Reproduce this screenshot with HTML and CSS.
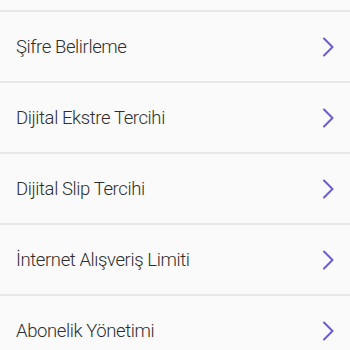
FILE: index.html
```html
<!DOCTYPE html>
<html lang="tr">
<head>
<meta charset="utf-8">
<link rel="stylesheet" href="styles.css">
</head>
<body>
<div class="top"></div>
<ul class="menu">
  <li class="row"><span class="label">Şifre Belirleme</span><svg class="chev" viewBox="0 0 12 20"><path d="M2 1.5 L10.5 10 L2 18.5"/></svg></li>
  <li class="row"><span class="label">Dijital Ekstre Tercihi</span><svg class="chev" viewBox="0 0 12 20"><path d="M2 1.5 L10.5 10 L2 18.5"/></svg></li>
  <li class="row"><span class="label">Dijital Slip Tercihi</span><svg class="chev" viewBox="0 0 12 20"><path d="M2 1.5 L10.5 10 L2 18.5"/></svg></li>
  <li class="row"><span class="label">İnternet Alışveriş Limiti</span><svg class="chev" viewBox="0 0 12 20"><path d="M2 1.5 L10.5 10 L2 18.5"/></svg></li>
  <li class="row"><span class="label">Abonelik Yönetimi</span><svg class="chev" viewBox="0 0 12 20"><path d="M2 1.5 L10.5 10 L2 18.5"/></svg></li>
</ul>
</body>
</html>
```
FILE: styles.css
```css
html, body {
  margin: 0;
  padding: 0;
  background: #fafafa;
  font-family: Roboto, "Noto Sans", sans-serif;
}
.top {
  height: 10px;
}
.menu {
  list-style: none;
  margin: 0;
  padding: 0;
}
.row {
  height: 69px;
  border-top: 2px solid #e8e8e8;
  display: flex;
  align-items: center;
  justify-content: space-between;
  padding: 0 16px 0 16px;
}
.label {
  font-size: 18.5px;
  font-weight: 300;
  letter-spacing: -0.4px;
  color: #2e2e2e;
  padding-top: 1px;
}
.chev {
  width: 12px;
  height: 20px;
  margin-right: 0;
}
.chev path {
  fill: none;
  stroke: #6a5bd2;
  stroke-width: 2;
  stroke-linecap: round;
  stroke-linejoin: round;
}
```
